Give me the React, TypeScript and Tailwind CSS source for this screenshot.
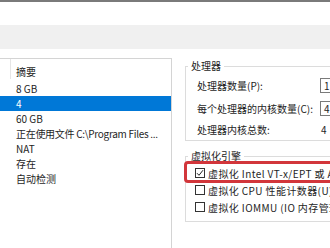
const summary = ['8 GB', '4', '60 GB', '正在使用文件 C:\\Program Files ...', 'NAT', '存在', '自动检测'];

const Check = ({ checked }: { checked?: boolean }) => (
  <span className="w-[10px] h-[10px] border border-[#333] bg-white flex items-center justify-center shrink-0">
    {checked && (
      <svg width="8" height="8" viewBox="0 0 8 8">
        <path d="M1 4.2 L3 6.3 L7 1.2" fill="none" stroke="#222" strokeWidth="1" />
      </svg>
    )}
  </span>
);

const App = () => {
  const engine = [
    { label: '虚拟化 Intel VT-x/EPT 或 AMD-V/RVI(V)', checked: true },
    { label: '虚拟化 CPU 性能计数器(U)', checked: false },
    { label: '虚拟化 IOMMU (IO 内存管理单元)(I)', checked: false },
  ];

  return (
    <div
      className="w-[330px] h-[248px] overflow-hidden bg-white text-[10px] text-[#1e1e1e]"
      style={{ fontFamily: '"Noto Sans CJK SC", "Noto Sans", sans-serif' }}
    >
      {/* window chrome */}
      <div className="h-[2px] bg-[#7a7a7a]" />
      <div className="h-[23px] bg-white" />
      <div className="h-[24px] bg-[#f0f0f0]" />
      <div className="h-[9px] bg-white" />

      <div className="flex">
        {/* Summary list */}
        <div className="w-[172px] h-[200px] shrink-0 border-t border-r border-[#d4d4d4]">
          <div className="h-[22px] flex">
            <div className="w-[11px] h-[20px] border-r border-[#e6e6e6]" />
            <div className="pl-[5px] pt-[5px] leading-[15px]">摘要</div>
          </div>
          {summary.map((item, i) => (
            <div
              key={i}
              className={
                i === 1
                  ? 'h-[15px] leading-[15px] pl-[16px] whitespace-nowrap bg-[#0078d7] text-white'
                  : i === 3
                    ? 'h-[15px] leading-[15px] pl-[16px] whitespace-nowrap tracking-[-0.3px]'
                    : 'h-[15px] leading-[15px] pl-[16px] whitespace-nowrap'
              }
            >
              {item}
            </div>
          ))}
        </div>

        {/* Settings */}
        <div className="pl-[13px]">
          <fieldset className="mt-[2px] w-[200px] border border-[#dcdcdc] pl-[11px] pb-[3px]">
            <legend className="px-[3px] -ml-[9px] leading-[12px]">处理器</legend>
            <div className="mt-[6px] flex items-center h-[15px]">
              <span className="w-[123px] whitespace-nowrap">处理器数量(P):</span>
              <span className="h-[15px] w-[40px] border border-[#7a7a7a] pl-[3px] leading-[13px]">1</span>
            </div>
            <div className="mt-[8px] flex items-center h-[15px]">
              <span className="w-[123px] whitespace-nowrap">每个处理器的内核数量(C):</span>
              <span className="h-[15px] w-[40px] border border-[#7a7a7a] pl-[3px] leading-[13px]">4</span>
            </div>
            <div className="mt-[6px] flex items-center h-[15px]">
              <span className="w-[124px] whitespace-nowrap">处理器内核总数:</span>
              <span>4</span>
            </div>
          </fieldset>

          <fieldset className="mt-[9px] w-[200px] border border-[#dcdcdc] pb-[5px]">
            <legend className="px-[3px] ml-[2px] leading-[12px]">虚拟化引擎</legend>
            <div className="mt-[3px]">
              {engine.map((row, i) => (
                <div key={i} className="relative h-[16px] pl-[9px] flex items-center gap-[3px] whitespace-nowrap mb-[1px]">
                  <Check checked={row.checked} />
                  <span className="tracking-[0.4px]">{row.label}</span>
                  {row.checked && (
                    <div className="absolute -left-[2px] -top-[4px] -bottom-[2px] w-[220px] border-[3px] border-[#d2363b] rounded-[4px]" />
                  )}
                </div>
              ))}
            </div>
          </fieldset>
        </div>
      </div>
    </div>
  );
};

export default App;
